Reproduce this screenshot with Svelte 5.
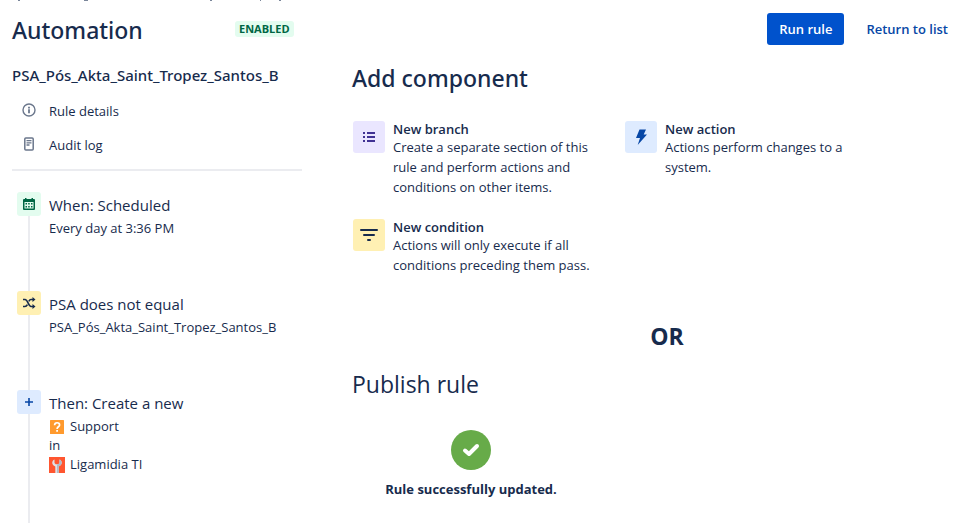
<script lang="ts">
	type Tone = 'green' | 'yellow' | 'blue' | 'purple';
	type IconName = 'calendar' | 'shuffle' | 'plus' | 'list' | 'bolt' | 'filter';

	type Step = { id: string; icon: IconName; tone: Tone; title: string; detail?: string };
	type Option = { id: string; icon: IconName; tone: Tone; title: string; text: string };

	const ruleName = 'PSA_Pós_Akta_Saint_Tropez_Santos_B';

	const steps: Step[] = [
		{ id: 'when', icon: 'calendar', tone: 'green', title: 'When: Scheduled', detail: 'Every day at 3:36 PM' },
		{ id: 'if', icon: 'shuffle', tone: 'yellow', title: 'PSA does not equal', detail: ruleName },
		{ id: 'then', icon: 'plus', tone: 'blue', title: 'Then: Create a new' }
	];

	const options: Option[] = [
		{
			id: 'branch',
			icon: 'list',
			tone: 'purple',
			title: 'New branch',
			text: 'Create a separate section of this rule and perform actions and conditions on other items.'
		},
		{
			id: 'action',
			icon: 'bolt',
			tone: 'blue',
			title: 'New action',
			text: 'Actions perform changes to a system.'
		},
		{
			id: 'condition',
			icon: 'filter',
			tone: 'yellow',
			title: 'New condition',
			text: 'Actions will only execute if all conditions preceding them pass.'
		}
	];
</script>

{#snippet glyph(name: IconName)}
	<svg viewBox="0 0 24 24" width="24" height="24" aria-hidden="true">
		{#if name === 'calendar'}
			<path
				fill="currentColor"
				fill-rule="evenodd"
				d="M8 6h1.5v1h5V6H16v1h1a1 1 0 0 1 1 1v9a1 1 0 0 1-1 1H7a1 1 0 0 1-1-1V8a1 1 0 0 1 1-1h1zM7.5 10v6.5h9V10z"
			/>
			<path
				fill="currentColor"
				d="M8.5 11H10v1.5H8.5zM11.2 11h1.5v1.5h-1.5zM14 11h1.5v1.5H14zM8.5 14H10v1.5H8.5zM11.2 14h1.5v1.5h-1.5zM14 14h1.5v1.5H14z"
			/>
		{:else if name === 'shuffle'}
			<path
				fill="none"
				stroke="currentColor"
				stroke-width="1.6"
				d="M6 8.5h2c2.800 0 3.500 7 6 7h2.500M6 15.500h2c1 0 1.800-.8 2.400-1.900M11.800 10.400c.6-1.100 1.300-1.900 2.200-1.900h2.500"
			/>
			<path fill="currentColor" d="M15.500 6 18.500 8.500l-3 2.500zM15.500 13l3 2.500-3 2.500z" />
		{:else if name === 'plus'}
			<path fill="none" stroke="currentColor" stroke-width="1.6" d="M12 8v8M8 12h8" />
		{:else if name === 'list'}
			<path
				fill="currentColor"
				d="M6 7h2v2H6zM10 7h8v2h-8zM6 11h2v2H6zM10 11h8v2h-8zM6 15h2v2H6zM10 15h8v2h-8z"
			/>
		{:else if name === 'bolt'}
			<path fill="currentColor" d="M10.5 4.500H17L14.700 9.500H18L8.700 20l2.300-7H7z" />
		{:else}
			<path
				fill="none"
				stroke="currentColor"
				stroke-width="2"
				stroke-linecap="round"
				d="M4 7h16M7 12h10M11 17h2"
			/>
		{/if}
	</svg>
{/snippet}

<div class="page">
	<!-- tail of the breadcrumb line scrolled out above the header -->
	<svg class="scrolled" width="300" height="1" aria-hidden="true">
		<path fill="#7a869a" d="M6 0h2v1H6zM72 0h4v1h-4zM198 0h2v1h-2zM248 0h1v1h-1zM267 0h2v1h-2z" />
	</svg>

	<header class="top">
		<h1>Automation</h1>
		<span class="lozenge">ENABLED</span>
		<div class="actions">
			<button type="button" class="primary">Run rule</button>
			<a href="#list" class="return">Return to list</a>
		</div>
	</header>

	<div class="columns">
		<aside>
			<h2 class="rule-name">{ruleName}</h2>
			<nav>
				<a href="#details">
					<svg viewBox="0 0 16 16" width="16" height="16" aria-hidden="true">
						<circle cx="8" cy="7" r="6" fill="none" stroke="currentColor" stroke-width="1.4" />
						<path fill="currentColor" d="M7.100 3.800h1.800v1.600H7.100zM7.100 6.300h1.800v4H7.100z" />
					</svg>
					Rule details
				</a>
				<a href="#audit">
					<svg viewBox="0 0 16 16" width="16" height="16" aria-hidden="true">
						<rect
							x="3.800"
							y="0.900"
							width="8.400"
							height="12.200"
							rx="1"
							fill="none"
							stroke="currentColor"
							stroke-width="1.5"
						/>
						<path stroke="currentColor" stroke-width="1.3" d="M5.500 3.600h5M5.500 5.800h5M5.500 8h3" />
					</svg>
					Audit log
				</a>
			</nav>

			<ol class="steps">
				{#each steps as step (step.id)}
					<li>
						<span class="tile {step.tone}">{@render glyph(step.icon)}</span>
						<div class="step-body">
							<h3>{step.title}</h3>
							{#if step.detail}
								<p>{step.detail}</p>
							{:else}
								<p class="entity">
									<svg viewBox="0 0 16 16" width="16" height="16" aria-hidden="true">
										<rect x="1" y="1" width="14" height="14" rx="0.500" fill="#ff9a2e" />
										<path
											fill="none"
											stroke="#fff"
											stroke-width="1.7"
											d="M5.600 6.200c0-3.200 5-3.200 5-.3 0 1.900-2.500 1.800-2.500 4"
										/>
										<path fill="#fff" d="M7.200 11H9v1.800H7.200z" />
									</svg>
									Support
								</p>
								<p>in</p>
								<p class="entity">
									<svg viewBox="0 0 16 16" width="16" height="16" aria-hidden="true">
										<rect width="16" height="16" fill="#ff5630" />
										<path
											fill="#dfe1e6"
											d="M5.500 2.500C2.300 3.800 2.500 8 6.300 9.500V16h3.400V9.500C13.500 8 13.700 3.800 10.500 2.500V6L9.300 7.200H6.700L5.500 6z"
										/>
										<path fill="#b3bac5" d="M8 7.200h1.300L10.500 6V2.500c3.200 1.300 3 5.500-.8 7V16H8z" />
									</svg>
									Ligamidia TI
								</p>
							{/if}
						</div>
					</li>
				{/each}
			</ol>
		</aside>

		<main>
			<h2 class="strong">Add component</h2>
			<div class="options">
				{#each options as option (option.id)}
					<button type="button" class="option">
						<span class="tile large {option.tone}">{@render glyph(option.icon)}</span>
						<span class="option-body">
							<strong>{option.title}</strong>
							<span>{option.text}</span>
						</span>
					</button>
				{/each}
			</div>

			<p class="or">OR</p>

			<h2>Publish rule</h2>
			<div class="published" role="status">
				<svg viewBox="0 0 40 40" width="40" height="40" aria-hidden="true">
					<circle cx="20" cy="20" r="20" fill="#67ab49" />
					<path
						fill="none"
						stroke="#fff"
						stroke-width="4"
						stroke-linecap="round"
						stroke-linejoin="round"
						d="m14 20.500 4 3.500 8-8"
					/>
				</svg>
				<p>Rule successfully updated.</p>
			</div>
		</main>
	</div>
</div>

<style>
	:global(body) {
		background: #fff;
	}

	.page {
		box-sizing: border-box;
		height: 100vh;
		overflow: hidden;
		display: flex;
		flex-direction: column;
		padding: 0 12px;
		font-family: 'Segoe UI', 'Open Sans', 'Noto Sans', sans-serif;
		font-size: 13px;
		line-height: 20px;
		color: #172b4d;
	}

	.scrolled {
		flex: none;
	}

	h1,
	h2,
	h3,
	p,
	ol {
		margin: 0;
		padding: 0;
	}

	h1,
	h2 {
		font-size: 23px;
		font-weight: 400;
		line-height: 28px;
	}

	h1,
	h2.strong,
	h2.rule-name {
		font-family: 'Segoe UI', 'Noto Sans', 'Open Sans', sans-serif;
		font-weight: 500;
	}

	a {
		color: inherit;
		text-decoration: none;
	}

	.top {
		display: flex;
		align-items: center;
		padding-top: 12px;
	}

	.top h1 {
		width: 223px;
		padding-top: 2px;
	}

	.lozenge {
		padding: 0 4px;
		border-radius: 3px;
		background: #e3fcef;
		color: #006644;
		font-size: 11px;
		font-weight: 700;
		line-height: 16px;
	}

	.actions {
		display: flex;
		align-items: center;
		gap: 22px;
		margin-left: auto;
	}

	.primary {
		height: 32px;
		padding: 0 12px;
		border: 0;
		border-radius: 3px;
		background: #0052cc;
		color: #fff;
		font: inherit;
		font-weight: 600;
	}

	.return {
		color: #0747a6;
		font-weight: 600;
	}

	.columns {
		flex: 1;
		display: flex;
		gap: 50px;
	}

	aside {
		flex: 0 0 290px;
		display: flex;
		flex-direction: column;
		padding-top: 20px;
	}

	h2.rule-name {
		font-size: 15px;
		line-height: 20px;
	}

	nav {
		display: flex;
		flex-direction: column;
		gap: 14px;
		padding: 16px 9px 14px;
		border-bottom: 2px solid #ebecf0;
	}

	nav a {
		display: flex;
		align-items: center;
		gap: 12px;
	}

	nav svg {
		color: #6b778c;
	}

	.steps {
		flex: 1;
		display: flex;
		flex-direction: column;
		list-style: none;
		padding: 21px 5px 0;
	}

	.steps li {
		display: flex;
		gap: 8px;
		min-height: 99px;
		background: linear-gradient(#ebecf0, #ebecf0) 11px 0 / 2px 100% no-repeat;
	}

	.steps li:last-child {
		flex: 1;
	}

	.tile {
		flex: none;
		display: grid;
		place-items: center;
		width: 24px;
		height: 24px;
		border-radius: 3px;
	}

	.tile.large {
		width: 32px;
		height: 32px;
	}

	.green {
		background: #e3fcef;
		color: #006644;
	}

	.yellow {
		background: #fff0b3;
		color: #172b4d;
	}

	.blue {
		background: #deebff;
		color: #0747a6;
	}

	.purple {
		background: #eae6ff;
		color: #403294;
	}

	.step-body {
		padding-top: 1px;
	}

	h3 {
		padding-bottom: 2px;
		font-size: 15px;
		font-weight: 400;
		line-height: 24px;
	}

	.step-body p {
		line-height: 19px;
	}

	.entity {
		display: flex;
		align-items: center;
		gap: 5px;
	}

	main {
		flex: 1;
		padding-top: 19px;
	}

	.options {
		display: grid;
		grid-template-columns: repeat(auto-fill, 244px);
		gap: 22px 28px;
		padding: 29px 1px 0;
		max-width: 560px;
	}

	.option {
		display: flex;
		align-items: flex-start;
		gap: 8px;
		padding: 0;
		border: 0;
		background: none;
		color: inherit;
		font: inherit;
		text-align: left;
	}

	.option-body {
		display: flex;
		flex-direction: column;
	}

	.option strong {
		font-weight: 600;
		line-height: 16px;
	}

	.or {
		padding: 47px 0 20px 34px;
		text-align: center;
		font-size: 23px;
		font-weight: 700;
		line-height: 28px;
	}

	.published {
		display: flex;
		flex-direction: column;
		align-items: center;
		gap: 9px;
		width: 238px;
		padding-top: 32px;
		font-weight: 700;
	}
</style>
